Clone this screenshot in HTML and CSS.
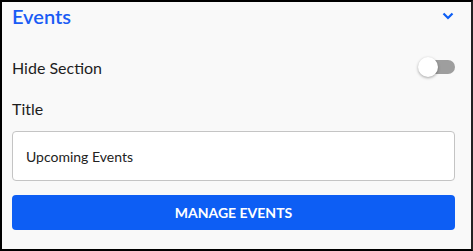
FILE: index.html
```html
<!DOCTYPE html>
<html lang="en">
<head>
    <meta charset="UTF-8">
    <title>Events</title>
    <link rel="stylesheet" href="styles.css">
</head>
<body>
    <div class="panel">
        <div class="panel-header">
            <h2>Events</h2>
            <svg class="chevron" width="12" height="8" viewBox="0 0 12 8">
                <path d="M1.5 1.5 L6 6 L10.5 1.5" fill="none" stroke="#0d5ef4" stroke-width="2.2"/>
            </svg>
        </div>

        <div class="toggle-row">
            <span class="label">Hide Section</span>
            <span class="switch">
                <span class="track"></span>
                <span class="thumb"></span>
            </span>
        </div>

        <label class="label title-label" for="title">Title</label>
        <input type="text" id="title" class="text-input" value="Upcoming Events">

        <button class="manage-btn">MANAGE EVENTS</button>
    </div>
</body>
</html>
```

FILE: styles.css
```css
/* Panel */
body {
    margin: 0;
    font-family: 'Lato', 'Open Sans', sans-serif;
}

.panel {
    box-sizing: border-box;
    width: 473px;
    height: 251px;
    border: 2px solid #000;
    border-right-color: #222;
    background-color: #f9f9f9;
    padding: 0 16px 0 10px;
}

.panel-header {
    display: flex;
    justify-content: space-between;
    align-items: center;
    height: 28px;
}

h2 {
    margin: 0;
    font-size: 20px;
    font-weight: 600;
    color: #1a5cf5;
}

.chevron {
    margin-right: 1px;
}

/* Toggle row */
.toggle-row {
    display: flex;
    justify-content: space-between;
    align-items: center;
    height: 28px;
    margin-top: 23px;
}

.label {
    font-size: 16px;
    color: #1e1e1e;
}

.switch {
    position: relative;
    width: 36px;
    height: 20px;
}

.track {
    position: absolute;
    right: 0;
    top: 3px;
    width: 34px;
    height: 14px;
    border-radius: 7px;
    background-color: #9e9e9e;
}

.thumb {
    position: absolute;
    left: -1px;
    top: 0;
    width: 20px;
    height: 20px;
    border-radius: 50%;
    background-color: #fff;
    box-shadow: 0 1px 3px rgba(0, 0, 0, 0.35);
}

/* Title field */
.title-label {
    display: block;
    margin-top: 18px;
    line-height: 20px;
}

.text-input {
    display: block;
    box-sizing: border-box;
    width: 100%;
    height: 50px;
    margin-top: 12px;
    padding: 0 13px;
    border: 1px solid #c4c4c4;
    border-radius: 4px;
    background-color: #fff;
    font-family: inherit;
    font-size: 14px;
    color: #222;
}

/* Button */
.manage-btn {
    display: block;
    width: 100%;
    height: 35px;
    margin-top: 14px;
    border: none;
    border-radius: 4px;
    background-color: #0d5ef4;
    color: #fff;
    font-family: inherit;
    font-size: 14px;
    font-weight: 700;
    cursor: pointer;
}
```
